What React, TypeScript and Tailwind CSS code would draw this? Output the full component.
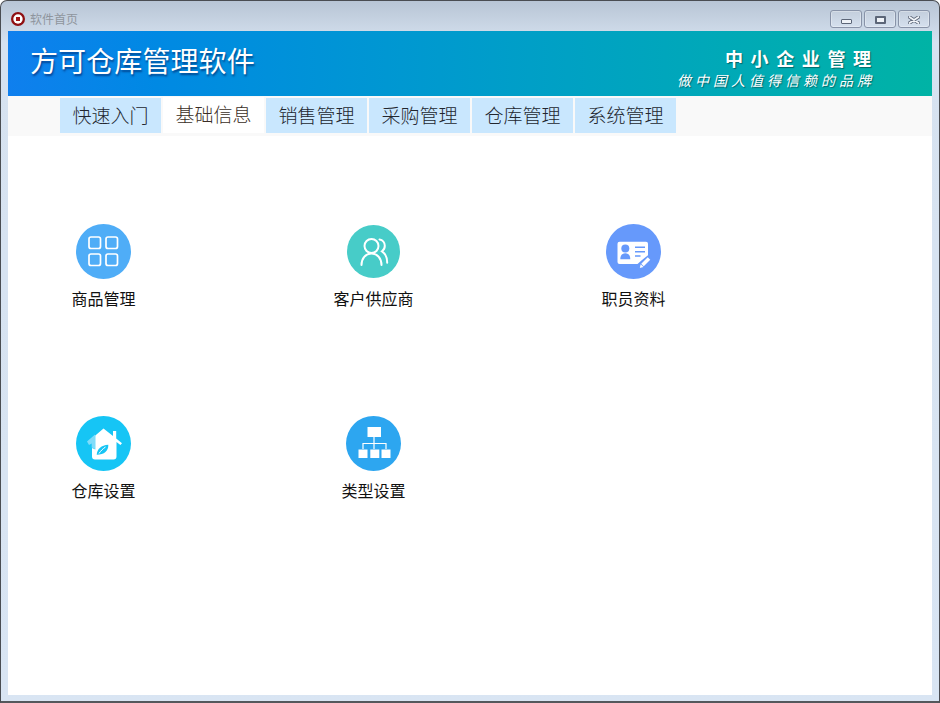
import type { ReactNode } from "react"

const tabs = ["快速入门", "基础信息", "销售管理", "采购管理", "仓库管理", "系统管理"]

function GridIcon() {
    return (
        <svg viewBox="0 0 55 55" className="w-[55px] h-[55px]">
            <circle cx="27.5" cy="27.5" r="27.5" fill="#4fadf7" />
            <g fill="none" stroke="#fff" strokeWidth="1.7">
                <rect x="13" y="13" width="11.5" height="11.5" rx="2" />
                <rect x="30" y="13" width="11.5" height="11.5" rx="2" />
                <rect x="13" y="30" width="11.5" height="11.5" rx="2" />
                <rect x="30" y="30" width="11.5" height="11.5" rx="2" />
            </g>
        </svg>
    )
}

function PeopleIcon() {
    return (
        <svg viewBox="0 0 53 53" className="w-[53px] h-[53px]">
            <circle cx="26.5" cy="26.5" r="26.5" fill="#47ccc8" />
            <g fill="none" stroke="#fff" strokeWidth="2" strokeLinecap="round">
                <circle cx="24.5" cy="21" r="7" />
                <path d="M14.5 40c0-6.500 4-11.500 10-11.500s10 5 10 11.500" />
                <path d="M32.500 14.500c3.200 .5 5.300 3.200 5.300 6.300 0 2.300-1 4.300-2.800 5.500 3 2 5.200 6.500 5.200 11.500" />
            </g>
        </svg>
    )
}

function CardIcon() {
    return (
        <svg viewBox="0 0 55 55" className="w-[55px] h-[55px]">
            <circle cx="27.500" cy="27.500" r="27.500" fill="#6699fb" />
            <path d="M13.500 17.700h26.500a2 2 0 0 1 2 2v11.500l-6 4.800-4.500 4h-18a2 2 0 0 1-2-2v-18.300a2 2 0 0 1 2-2z" fill="#fff" />
            <circle cx="19.300" cy="24.500" r="4" fill="#6699fb" />
            <path d="M14.300 35.200c0-4 2-6 5-6s5 2 5 6z" fill="#6699fb" />
            <path d="M29 23.300h10M29 27.700h10M29 32h5.500" stroke="#6699fb" strokeWidth="1.500" />
            <path d="M36.500 41l6.500-6.500" stroke="#fff" strokeWidth="3.600" />
            <path d="M33.800 44l.9-3.800 2.800 2.800z" fill="#fff" />
        </svg>
    )
}

function HouseIcon() {
    return (
        <svg viewBox="0 0 55 55" className="w-[55px] h-[55px]">
            <circle cx="27.500" cy="27.500" r="27.500" fill="#16c5f5" />
            <path d="M11 25.500l8-7v14.500l-3.300-1.500v-4l-2.700 1.500z" fill="#7fdcfa" />
            <path d="M27.500 12.500l9.500 7.500v-5h3.200v7.500l5.800 4.700-1.600 1.800-3.900-3v14.500a3 3 0 0 1-3 3h-18.500a3 3 0 0 1-3-3v-8.500l3.300 1.500v-14z" fill="#fff" />
            <path d="M20.700 38.700c.5-6 4.500-9.500 11.600-10 .3 6-4 10-11.600 10z" fill="#16c5f5" />
            <path d="M23 37.500c1.800-2.800 3.700-4.600 6.500-6.500" stroke="#fff" strokeWidth="1" fill="none" />
        </svg>
    )
}

function TreeIcon() {
    return (
        <svg viewBox="0 0 55 55" className="w-[55px] h-[55px]">
            <circle cx="27.500" cy="27.500" r="27.500" fill="#2da6f0" />
            <rect x="21.500" y="11" width="13.500" height="10" fill="#fff" />
            <rect x="12.500" y="33.500" width="9" height="8.500" fill="#fff" />
            <rect x="24.300" y="33.500" width="9" height="8.500" fill="#fff" />
            <rect x="35.500" y="33.500" width="9" height="8.500" fill="#fff" />
            <path d="M28 21v12M17 33v-5.500h23v5.500" fill="none" stroke="#fff" strokeWidth="1.200" />
        </svg>
    )
}

function AppLogo() {
    return (
        <svg viewBox="0 0 14 14" className="w-[14px] h-[14px] shrink-0">
            <circle cx="7" cy="7" r="7" fill="#8f0f12" />
            <circle cx="7" cy="7" r="4.700" fill="#fff" />
            <rect x="5" y="5" width="4" height="4" fill="#a01416" />
        </svg>
    )
}

function WinButton({ children }: { children: ReactNode }) {
    return (
        <div className="w-[32px] h-[18px] rounded-[3px] border border-[#8893a8] bg-gradient-to-b from-[#c3cedc] to-[#d5e0ee] shadow-[inset_0_0_0_1px_rgba(255,255,255,0.3)] flex items-center justify-center">
            {children}
        </div>
    )
}

function Item({ icon, label }: { icon: ReactNode, label: string }) {
    return (
        <div className="w-[101px] flex flex-col items-center">
            <div className="h-[55px] flex items-center justify-center">{icon}</div>
            <div className="mt-[9px] text-[16px] leading-[20px] text-[#111] whitespace-nowrap">{label}</div>
        </div>
    )
}

export default function App() {
    return (
        <div className="w-[940px] h-[703px] flex flex-col rounded-t-[7px] border border-b-2 border-[#4a4d52] border-b-[#55585c] bg-gradient-to-b from-[#b8c5d5] via-[#d6e2f0] via-[6%] to-[#d9e5f3] px-[7px] pb-[6px] font-['Noto_Sans_CJK_SC',sans-serif] overflow-hidden">
            {/* title bar */}
            <div className="h-[30px] shrink-0 flex items-center pl-[3px] pr-[2px] pt-[6px]">
                <AppLogo />
                <span className="ml-[5px] text-[12px] text-[#8f959d]">软件首页</span>
                <div className="ml-auto flex gap-[2px]">
                    <WinButton>
                        <div className="w-[11px] h-[5px] mt-[5px] rounded-[1px] border border-[#5c6678] bg-[#eef2f7]" />
                    </WinButton>
                    <WinButton>
                        <div className="w-[11px] h-[8px] mt-[1px] rounded-[1px] border-2 border-[#5c6678] bg-[#eef2f7]" />
                    </WinButton>
                    <WinButton>
                        <svg viewBox="0 0 12 8" className="w-[12px] h-[8px] mt-[1px]">
                            <path d="M1.500 1l9 6M10.500 1l-9 6" stroke="#5c6678" strokeWidth="3.400" strokeLinecap="round" />
                            <path d="M1.500 1l9 6M10.500 1l-9 6" stroke="#f2f5f9" strokeWidth="1.800" strokeLinecap="round" />
                        </svg>
                    </WinButton>
                </div>
            </div>

            {/* banner */}
            <div className="h-[65px] shrink-0 flex items-center justify-between bg-gradient-to-r from-[#0f7fee] to-[#00b3a5] pl-[22px] pr-[61px]">
                <div className="text-[28px] tracking-[0.1px] leading-none text-white -mt-[8px] [text-shadow:1px_2px_2px_rgba(0,20,80,0.55)]">方可仓库管理软件</div>
                <div className="mt-[11px] flex flex-col items-end text-white [text-shadow:1px_1px_1px_rgba(0,60,60,0.6)]">
                    <div className="text-[18px] leading-[22px] font-bold tracking-[7.600px] -mr-[7.600px] whitespace-nowrap">中小企业管理</div>
                    <div className="text-[14px] leading-[22px] italic tracking-[4px] -mr-[4px] whitespace-nowrap">做中国人值得信赖的品牌</div>
                </div>
            </div>

            {/* tabs */}
            <div className="h-[40px] shrink-0 flex items-start gap-[2px] bg-[#f9f9f9] pl-[52px] pt-[2px]">
                {tabs.map((t, i) => (
                    i === 1 ? (
                        <div key={t} className="w-[101px] h-[36px] -mt-[1px] pb-[2px] bg-white flex items-center justify-center text-[19px] font-light text-[#3a2e26]">{t}</div>
                    ) : (
                        <div key={t} className="w-[101px] h-[35px] bg-[#c9e7fe] flex items-center justify-center text-[19px] font-light text-[#22262e]">{t}</div>
                    )
                ))}
            </div>

            {/* content */}
            <div className="flex-1 min-h-0 bg-white pl-[45px] pt-[88px]">
                <div className="grid grid-cols-[270px_260px_101px] auto-rows-[192px]">
                    <Item icon={<GridIcon />} label="商品管理" />
                    <Item icon={<PeopleIcon />} label="客户供应商" />
                    <Item icon={<CardIcon />} label="职员资料" />
                    <Item icon={<HouseIcon />} label="仓库设置" />
                    <Item icon={<TreeIcon />} label="类型设置" />
                </div>
            </div>
        </div>
    )
}
